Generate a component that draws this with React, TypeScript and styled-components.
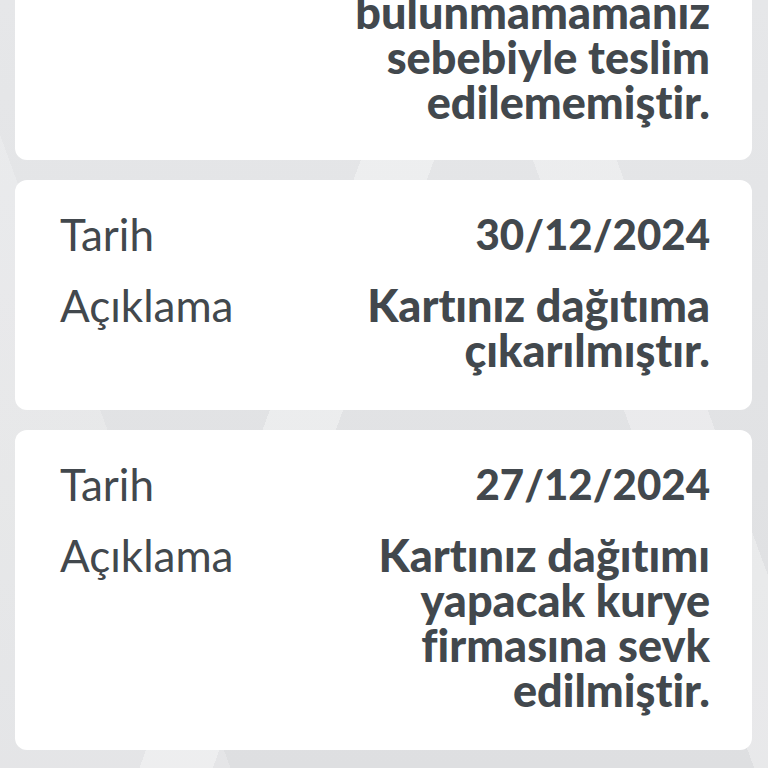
import React from "react";
import styled, { createGlobalStyle } from "styled-components";

type Entry = {
  date: string;
  lines: string[];
};

const entries: Entry[] = [
  {
    date: "02/01/2025",
    lines: ["Kartınız", "adresinizde", "bulunmamamanız", "sebebiyle teslim", "edilememiştir."],
  },
  {
    date: "30/12/2024",
    lines: ["Kartınız dağıtıma", "çıkarılmıştır."],
  },
  {
    date: "27/12/2024",
    lines: ["Kartınız dağıtımı", "yapacak kurye", "firmasına sevk", "edilmiştir."],
  },
];

const GlobalStyle = createGlobalStyle`
  html, body {
    margin: 0;
    padding: 0;
  }
  body {
    width: 768px;
    height: 768px;
    overflow: hidden;
    font-family: "Lato", "Liberation Sans", sans-serif;
    font-variant-ligatures: none;
    background-color: #e3e4e6;
    background-image:
      linear-gradient(110deg, transparent 0 40%, rgba(255,255,255,0.35) 40% 47%, transparent 47%),
      linear-gradient(70deg, rgba(255,255,255,0.2) 0 22%, transparent 22% 72%, rgba(255,255,255,0.3) 72% 80%, transparent 80%),
      linear-gradient(180deg, #e6e7e9, #dedfe1);
  }
`;

const SList = styled.main`
  display: flex;
  flex-direction: column;
  gap: 20px;
  padding: 0 16px 0 15px;
  margin-top: -203px;
`;

const SCard = styled.section<{ $bottom?: number }>`
  display: grid;
  grid-template-columns: auto 1fr;
  row-gap: 26px;
  background: #ffffff;
  border-radius: 12px;
  padding: 32px 42px ${(p) => p.$bottom ?? 37}px 45px;
`;

const SLabel = styled.div`
  font-size: 44px;
  font-weight: 400;
  line-height: 45px;
  color: #42484d;
`;

const SValue = styled.div<{ $size?: number }>`
  font-size: ${(p) => p.$size ?? 45}px;
  font-weight: 900;
  line-height: 45px;
  color: #42484d;
  text-align: right;
`;

export default function App() {
  return (
    <>
      <GlobalStyle />
      <SList>
        {entries.map((e, idx) => (
          <SCard key={e.date} $bottom={idx === 0 ? 35 : 37}>
            <SLabel>Tarih</SLabel>
            <SValue $size={42}>{e.date}</SValue>
            <SLabel>Açıklama</SLabel>
            <SValue>
              {e.lines.map((l, i) => (
                <div key={i}>{l}</div>
              ))}
            </SValue>
          </SCard>
        ))}
      </SList>
    </>
  );
}
